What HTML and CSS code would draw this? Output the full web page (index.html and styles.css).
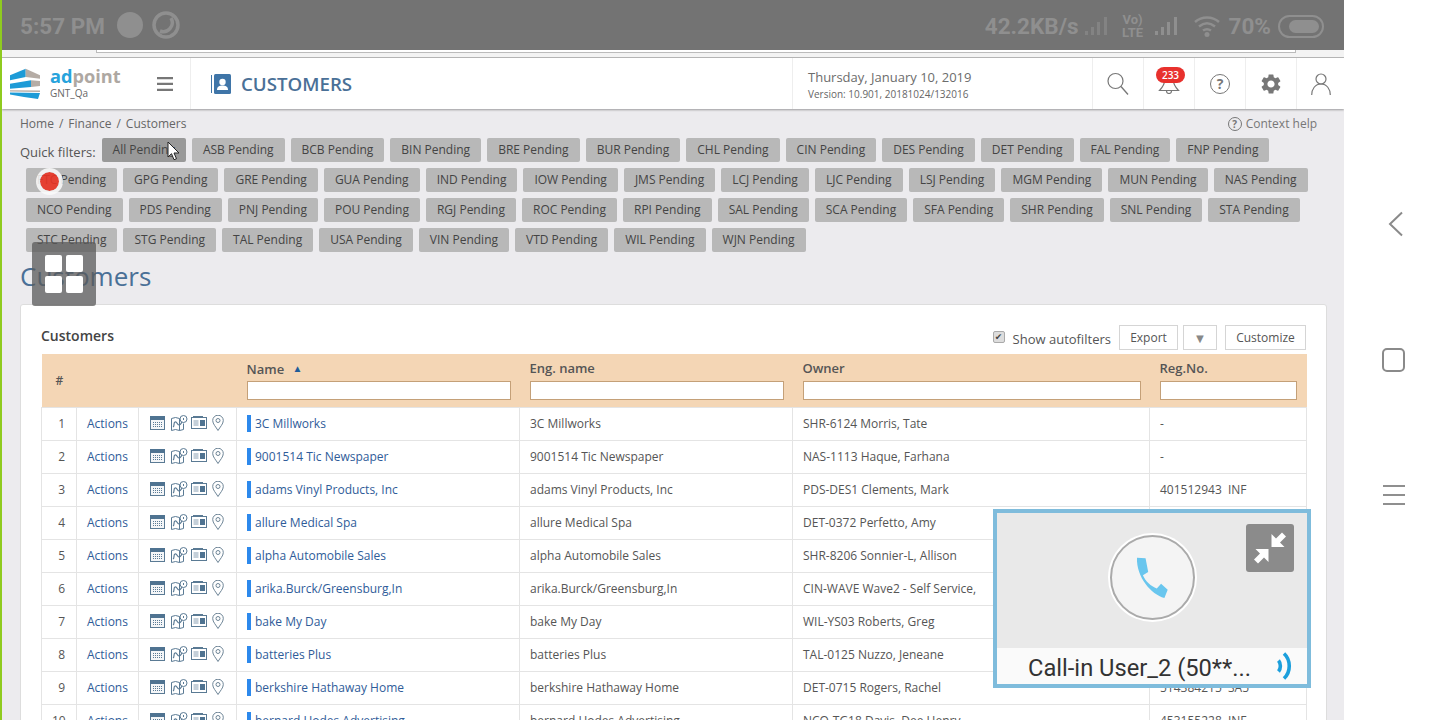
FILE: index.html
```html
<!DOCTYPE html>
<html lang="en">
<head>
  <meta charset="UTF-8">
  <meta name="viewport" content="width=device-width, initial-scale=1.0">
  <title>Customers</title>
  <link rel="stylesheet" href="styles.css">
</head>
<body>
  <svg class="defs" width="0" height="0">
    <symbol id="i-cal" viewBox="0 0 15 14">
      <rect x="0.5" y="0.5" width="14" height="13" fill="#f4f6f8" stroke="#5a7a94"/>
      <rect x="0" y="0" width="15" height="4" fill="#4f7391"/>
      <path d="M3 6.500h9M3 8.500h9M3 10.500h9" stroke="#5a7a94" stroke-width="1" stroke-dasharray="1 1"/>
    </symbol>
    <symbol id="i-map" viewBox="0 0 17 16">
      <path d="M0.5 3.5l4-1 4 1v12l-4-1-4 1z" fill="#fff" stroke="#5a7a94"/>
      <path d="M8.500 15.500l4-1 0-6" fill="none" stroke="#5a7a94"/>
      <path d="M2 12c2-1 0-4 2-5s2 3 4 3 2-2 3-3" fill="none" stroke="#5a7a94" stroke-width="1.200"/>
      <circle cx="12.500" cy="4" r="3.500" fill="#fff" stroke="#5a7a94"/>
      <path d="M12.500 3v2" stroke="#5a7a94"/>
    </symbol>
    <symbol id="i-card" viewBox="0 0 16 13">
      <rect x="0.500" y="1.500" width="15" height="11" fill="#fff" stroke="#5a7a94"/>
      <rect x="9" y="4" width="5" height="6" fill="#4f7391"/>
      <path d="M2.500 5h5M2.500 7h5M2.500 9h5" stroke="#8aa0b3"/>
      <path d="M2 0.500h10" stroke="#5a7a94"/>
    </symbol>
    <symbol id="i-pin" viewBox="0 0 12 16">
      <path d="M6 15.500C4 12 0.700 9 0.700 5.500a5.300 5.300 0 0 1 10.600 0C11.300 9 8 12 6 15.500z" fill="#fff" stroke="#6d8496"/>
      <circle cx="6" cy="5.500" r="2" fill="#fff" stroke="#6d8496"/>
    </symbol>
  </svg>

  <div class="screen">
    <div class="statusbar">
      <span class="clock">5:57 PM</span>
      <span class="dot-solid"></span>
      <svg class="dot-ring" width="28" height="28" viewBox="0 0 28 28"><circle cx="14" cy="14" r="12" fill="none" stroke="currentColor" stroke-width="3.500"/><path d="M19 7a9 9 0 0 1-11 13" fill="none" stroke="currentColor" stroke-width="3.500"/></svg>
      <div class="status-right">
        <span class="speed">42.2KB/s</span>
        <svg class="bars dim" width="26" height="22" viewBox="0 0 26 22"><path d="M1 20h3v-4H1zM7 20h3v-8H7zM13 20h3V7h-3zM20 20h3V2h-3z" fill="currentColor"/></svg>
        <span class="volte">Vo)<br>LTE</span>
        <svg class="bars" width="26" height="22" viewBox="0 0 26 22"><path d="M1 20h3v-4H1zM7 20h3v-8H7zM13 20h3V7h-3zM20 20h3V2h-3z" fill="currentColor"/></svg>
        <svg class="wifi" width="28" height="24" viewBox="0 0 28 24"><path d="M1 8c7-6 17-6 24 0M5 12.500c5-4 11-4 16 0M9 16.500c3-2 5-2 8 0" fill="none" stroke="currentColor" stroke-width="2.500"/><circle cx="13" cy="20.500" r="2.500" fill="currentColor"/></svg>
        <span class="pct">70%</span>
        <span class="battery"><span class="battery-fill"></span></span>
      </div>
    </div>

    <div class="topstrip"><div class="topstrip-input"></div></div>

    <header class="header">
      <div class="brand">
        <svg class="logo" width="30" height="32" viewBox="0 0 30 32">
          <path d="M0 7.300L15.700 0.700V9L0 12.300z" fill="#1d9bd7"/>
          <path d="M15.700 0.700L30 7.300v3.400L15.700 9z" fill="#b5aca5"/>
          <path d="M0 15.700l21-3.400V19L0 20.700z" fill="#1d9bd7"/>
          <path d="M21 12.300l9 .7v5l-9 1z" fill="#b5aca5"/>
          <path d="M0 22.300l30 .2V24L0 23.500z" fill="#b5aca5"/>
          <path d="M0 24.500L30 25l-2 6-14-2L0 26.500z" fill="#1d9bd7"/>
        </svg>
        <div class="brand-text">
          <div class="brand-name"><span class="brand-ad">ad</span>point</div>
          <div class="brand-sub">GNT_Qa</div>
        </div>
        <svg class="burger" width="16" height="14" viewBox="0 0 16 14"><path d="M0 0h16v2.300H0zM0 5.800h16v2.300H0zM0 11.700h16V14H0z" fill="#777"/></svg>
      </div>
      <div class="page-title">
        <svg width="20" height="20" viewBox="0 0 20 20">
          <rect x="0" y="1" width="1" height="18" fill="#3f75a8"/>
          <rect x="3" y="0" width="17" height="20" rx="1.500" fill="#3f75a8"/>
          <circle cx="11.500" cy="8" r="3.200" fill="#fff"/>
          <path d="M6 16c0-3.500 2.500-4.500 5.500-4.500S17 12.500 17 16z" fill="#fff"/>
        </svg>
        <span class="page-title-text">CUSTOMERS</span>
      </div>
      <div class="date-box">
        <div class="date">Thursday, January 10, 2019</div>
        <div class="version">Version: 10.901, 20181024/132016</div>
      </div>
      <div class="head-icon">
        <svg width="22" height="24" viewBox="0 0 22 24"><circle cx="8.500" cy="9" r="7.500" fill="none" stroke="#777" stroke-width="1.200"/><path d="M14 14.500l7 8" stroke="#777" stroke-width="1.300"/></svg>
      </div>
      <div class="head-icon">
        <svg class="bell" width="22" height="20" viewBox="0 0 22 20"><path d="M11 1C7 1 6.500 4 6.500 7c0 4-2 6-5 9.500h19c-3-3.500-5-5.500-5-9.500 0-3-.5-6-4.500-6z" fill="#fff" stroke="#777" stroke-width="1.200"/><path d="M8.500 17a2.500 2.500 0 0 0 5 0" fill="none" stroke="#777" stroke-width="1.200"/></svg>
        <span class="badge">233</span>
      </div>
      <div class="head-icon">
        <span class="help-big">?</span>
      </div>
      <div class="head-icon">
        <svg width="24" height="24" viewBox="0 0 24 24"><path d="M19.140 12.940c.04-.3.06-.61.06-.94 0-.32-.02-.64-.07-.94l2.030-1.580a.49.49 0 0 0 .12-.61l-1.920-3.320a.488.488 0 0 0-.59-.22l-2.390.96c-.5-.38-1.030-.7-1.620-.94l-.36-2.540a.484.484 0 0 0-.48-.41h-3.840c-.24 0-.43.17-.47.41l-.36 2.540c-.59.24-1.130.57-1.620.94l-2.390-.96c-.22-.08-.47 0-.59.22L2.740 8.870c-.12.21-.08.47.12.61l2.030 1.580c-.05.3-.09.63-.09.94s.02.64.07.94l-2.030 1.580a.49.49 0 0 0-.12.61l1.920 3.320c.12.22.37.29.59.22l2.390-.96c.5.38 1.030.7 1.620.94l.36 2.540c.05.24.24.41.48.41h3.840c.24 0 .44-.17.47-.41l.36-2.540c.59-.24 1.130-.56 1.620-.94l2.390.96c.22.08.47 0 .59-.22l1.920-3.320c.12-.22.07-.47-.12-.61l-2.010-1.580zM12 15.600c-1.980 0-3.600-1.620-3.600-3.600s1.620-3.600 3.600-3.600 3.600 1.620 3.600 3.600-1.620 3.600-3.600 3.600z" fill="#777"/></svg>
      </div>
      <div class="head-icon head-icon-last">
        <svg width="20" height="24" viewBox="0 0 20 24"><circle cx="10" cy="7" r="5" fill="none" stroke="#777" stroke-width="1.200"/><path d="M0.700 23c0-6 3.500-11 9.300-11s9.300 5 9.300 11" fill="none" stroke="#777" stroke-width="1.200"/></svg>
      </div>
    </header>

    <main class="content">
      <div class="crumbs">
        <span>Home<span class="sep">/</span>Finance<span class="sep">/</span>Customers</span>
        <span class="context-help"><span class="help-small">?</span>Context help</span>
      </div>

      <div class="filters">
        <span class="filters-label">Quick filters:</span>
        <a class="chip chip-active">All Pending</a>
        <a class="chip">ASB Pending</a>
        <a class="chip">BCB Pending</a>
        <a class="chip">BIN Pending</a>
        <a class="chip">BRE Pending</a>
        <a class="chip">BUR Pending</a>
        <a class="chip">CHL Pending</a>
        <a class="chip">CIN Pending</a>
        <a class="chip">DES Pending</a>
        <a class="chip">DET Pending</a>
        <a class="chip">FAL Pending</a>
        <a class="chip">FNP Pending</a>
        <a class="chip">FTC Pending</a>
        <a class="chip">GPG Pending</a>
        <a class="chip">GRE Pending</a>
        <a class="chip">GUA Pending</a>
        <a class="chip">IND Pending</a>
        <a class="chip">IOW Pending</a>
        <a class="chip">JMS Pending</a>
        <a class="chip">LCJ Pending</a>
        <a class="chip">LJC Pending</a>
        <a class="chip">LSJ Pending</a>
        <a class="chip">MGM Pending</a>
        <a class="chip">MUN Pending</a>
        <a class="chip">NAS Pending</a>
        <a class="chip">NCO Pending</a>
        <a class="chip">PDS Pending</a>
        <a class="chip">PNJ Pending</a>
        <a class="chip">POU Pending</a>
        <a class="chip">RGJ Pending</a>
        <a class="chip">ROC Pending</a>
        <a class="chip">RPI Pending</a>
        <a class="chip">SAL Pending</a>
        <a class="chip">SCA Pending</a>
        <a class="chip">SFA Pending</a>
        <a class="chip">SHR Pending</a>
        <a class="chip">SNL Pending</a>
        <a class="chip">STA Pending</a>
        <a class="chip">STC Pending</a>
        <a class="chip">STG Pending</a>
        <a class="chip">TAL Pending</a>
        <a class="chip">USA Pending</a>
        <a class="chip">VIN Pending</a>
        <a class="chip">VTD Pending</a>
        <a class="chip">WIL Pending</a>
        <a class="chip">WJN Pending</a>
      </div>

      <h1 class="heading">Customers</h1>

      <section class="card">
        <div class="card-top">
          <span class="card-title">Customers</span>
          <div class="tools">
            <span class="check">&#10004;</span>
            <span class="tools-label">Show autofilters</span>
            <button class="btn btn-export">Export</button>
            <button class="btn btn-arrow">&#9660;</button>
            <button class="btn btn-custom">Customize</button>
          </div>
        </div>

        <table class="grid">
          <colgroup>
            <col class="c-num"><col class="c-act"><col class="c-ico"><col class="c-name"><col class="c-eng"><col class="c-owner"><col class="c-reg">
          </colgroup>
          <thead>
            <tr>
              <th class="th-num">#</th>
              <th colspan="2"></th>
              <th><div class="th-label">Name <span class="sort">&#9650;</span></div><input class="th-input" type="text"></th>
              <th><div class="th-label">Eng. name</div><input class="th-input" type="text"></th>
              <th><div class="th-label">Owner</div><input class="th-input" type="text"></th>
              <th><div class="th-label">Reg.No.</div><input class="th-input" type="text"></th>
            </tr>
          </thead>
          <tbody>
            <tr>
              <td class="num">1</td><td><a class="link">Actions</a></td>
              <td class="ico"><svg class="i1"><use href="#i-cal"/></svg><svg class="i2"><use href="#i-map"/></svg><svg class="i3"><use href="#i-card"/></svg><svg class="i4"><use href="#i-pin"/></svg></td>
              <td><a class="link name">3C Millworks</a></td><td>3C Millworks</td><td>SHR-6124 Morris, Tate</td><td>-</td>
            </tr>
            <tr>
              <td class="num">2</td><td><a class="link">Actions</a></td>
              <td class="ico"><svg class="i1"><use href="#i-cal"/></svg><svg class="i2"><use href="#i-map"/></svg><svg class="i3"><use href="#i-card"/></svg><svg class="i4"><use href="#i-pin"/></svg></td>
              <td><a class="link name">9001514 Tic Newspaper</a></td><td>9001514 Tic Newspaper</td><td>NAS-1113 Haque, Farhana</td><td>-</td>
            </tr>
            <tr>
              <td class="num">3</td><td><a class="link">Actions</a></td>
              <td class="ico"><svg class="i1"><use href="#i-cal"/></svg><svg class="i2"><use href="#i-map"/></svg><svg class="i3"><use href="#i-card"/></svg><svg class="i4"><use href="#i-pin"/></svg></td>
              <td><a class="link name">adams Vinyl Products, Inc</a></td><td>adams Vinyl Products, Inc</td><td>PDS-DES1 Clements, Mark</td><td>401512943&nbsp; INF</td>
            </tr>
            <tr>
              <td class="num">4</td><td><a class="link">Actions</a></td>
              <td class="ico"><svg class="i1"><use href="#i-cal"/></svg><svg class="i2"><use href="#i-map"/></svg><svg class="i3"><use href="#i-card"/></svg><svg class="i4"><use href="#i-pin"/></svg></td>
              <td><a class="link name">allure Medical Spa</a></td><td>allure Medical Spa</td><td>DET-0372 Perfetto, Amy</td><td></td>
            </tr>
            <tr>
              <td class="num">5</td><td><a class="link">Actions</a></td>
              <td class="ico"><svg class="i1"><use href="#i-cal"/></svg><svg class="i2"><use href="#i-map"/></svg><svg class="i3"><use href="#i-card"/></svg><svg class="i4"><use href="#i-pin"/></svg></td>
              <td><a class="link name">alpha Automobile Sales</a></td><td>alpha Automobile Sales</td><td>SHR-8206 Sonnier-L, Allison</td><td></td>
            </tr>
            <tr>
              <td class="num">6</td><td><a class="link">Actions</a></td>
              <td class="ico"><svg class="i1"><use href="#i-cal"/></svg><svg class="i2"><use href="#i-map"/></svg><svg class="i3"><use href="#i-card"/></svg><svg class="i4"><use href="#i-pin"/></svg></td>
              <td><a class="link name">arika.Burck/Greensburg,In</a></td><td>arika.Burck/Greensburg,In</td><td>CIN-WAVE Wave2 - Self Service,</td><td></td>
            </tr>
            <tr>
              <td class="num">7</td><td><a class="link">Actions</a></td>
              <td class="ico"><svg class="i1"><use href="#i-cal"/></svg><svg class="i2"><use href="#i-map"/></svg><svg class="i3"><use href="#i-card"/></svg><svg class="i4"><use href="#i-pin"/></svg></td>
              <td><a class="link name">bake My Day</a></td><td>bake My Day</td><td>WIL-YS03 Roberts, Greg</td><td></td>
            </tr>
            <tr>
              <td class="num">8</td><td><a class="link">Actions</a></td>
              <td class="ico"><svg class="i1"><use href="#i-cal"/></svg><svg class="i2"><use href="#i-map"/></svg><svg class="i3"><use href="#i-card"/></svg><svg class="i4"><use href="#i-pin"/></svg></td>
              <td><a class="link name">batteries Plus</a></td><td>batteries Plus</td><td>TAL-0125 Nuzzo, Jeneane</td><td></td>
            </tr>
            <tr>
              <td class="num">9</td><td><a class="link">Actions</a></td>
              <td class="ico"><svg class="i1"><use href="#i-cal"/></svg><svg class="i2"><use href="#i-map"/></svg><svg class="i3"><use href="#i-card"/></svg><svg class="i4"><use href="#i-pin"/></svg></td>
              <td><a class="link name">berkshire Hathaway Home</a></td><td>berkshire Hathaway Home</td><td>DET-0715 Rogers, Rachel</td><td>514384215&nbsp; SA5</td>
            </tr>
            <tr>
              <td class="num">10</td><td><a class="link">Actions</a></td>
              <td class="ico"><svg class="i1"><use href="#i-cal"/></svg><svg class="i2"><use href="#i-map"/></svg><svg class="i3"><use href="#i-card"/></svg><svg class="i4"><use href="#i-pin"/></svg></td>
              <td><a class="link name">bernard Hodes Advertising</a></td><td>bernard Hodes Advertising</td><td>NCO-TG18 Davis, Dee Henry</td><td>453155228&nbsp; INF</td>
            </tr>
          </tbody>
        </table>
      </section>
    </main>

    <!-- things floating over the page -->
    <span class="rec-dot"></span>
    <svg class="cursor" width="13" height="20" viewBox="0 0 13 20"><path d="M1 1v15l3.500-3.300 2.500 6 2.500-1-2.500-5.700h5z" fill="#fff" stroke="#222"/></svg>
    <div class="float-grid"><span></span><span></span><span></span><span></span></div>

    <div class="call">
      <div class="call-body">
        <div class="call-circle">
          <svg width="38" height="47" viewBox="460 165 115 140"><path d="M472 175L498 177L506 218L490 228C497 245 515 262 532 268L545 254L565 272L555 297C515 285 470 235 472 175Z" fill="#69c6ee"/></svg>
        </div>
        <div class="call-min">
          <svg width="48" height="48" viewBox="0 0 48 48"><path d="M25.500 23V10l4.500 4.500 6-6 4 4-6 6 4.500 4.500zM22.500 25v13L18 33.500l-6 6-4-4 6-6L9.500 25z" fill="#fff"/></svg>
        </div>
      </div>
      <div class="call-foot">
        <span class="call-name">Call-in User_2 (50**...</span>
        <svg class="call-signal" width="18" height="28" viewBox="0 0 18 28"><path d="M2.500 8.500c2.500 3 2.500 8 0 11" fill="none" stroke="#1c9fdc" stroke-width="3.600"/><path d="M8 1.500c7 6.500 7 18.500 0 25" fill="none" stroke="#1c9fdc" stroke-width="3.600"/></svg>
      </div>
    </div>
  </div>

  <nav class="softkeys">
    <svg class="softkey-back" width="16" height="26" viewBox="0 0 16 26"><path d="M14 1.500L2 13l12 11.500" fill="none" stroke="#8a8a8a" stroke-width="2"/></svg>
    <span class="softkey-square"></span>
    <svg class="softkey-menu" width="24" height="20" viewBox="0 0 24 20"><path d="M1 1h22M1 10h22M1 19h22" stroke="#8f8f8f" stroke-width="2"/></svg>
  </nav>
</body>
</html>
```

FILE: styles.css
```css
* {
  box-sizing: border-box;
}
html, body {
  margin: 0;
  padding: 0;
  height: 720px;
  overflow: hidden;
}
body {
  display: flex;
  width: 1440px;
  background-color: #fff;
  font-family: "Open Sans", Arial, sans-serif;
  font-size: 12px;
  color: #555;
}
.defs {
  position: absolute;
}
.screen {
  position: relative;
  width: 1344px;
  height: 720px;
  overflow: hidden;
  background-color: #ecebee;
  border-left: 2px solid #8fcb1f;
  display: flex;
  flex-direction: column;
}

/* status bar */
.statusbar {
  flex: none;
  height: 50px;
  margin-left: -2px;
  background-color: #737373;
  color: #8f8f8f;
  display: flex;
  align-items: center;
  font-family: Roboto, Arial, sans-serif;
  font-weight: 700;
  font-size: 22.5px;
  padding: 2px 20px 0;
}
.clock {
  width: 97px;
}
.dot-solid {
  width: 26px;
  height: 26px;
  border-radius: 50%;
  background-color: #8f8f8f;
  margin: -2px 9px 0 0;
}
.dot-ring {
  margin-top: -2px;
}
.status-right {
  margin-left: auto;
  display: flex;
  align-items: center;
}
.speed {
  margin-right: 5px;
}
.bars.dim {
  opacity: 0.6;
  margin-right: 10px;
}
.volte {
  font-size: 13px;
  line-height: 13px;
  width: 26px;
  margin-right: 8px;
  text-align: center;
}
.wifi {
  margin-left: 14px;
  margin-right: 7px;
}
.pct {
  margin-right: 7px;
}
.battery {
  width: 46px;
  height: 23px;
  border: 2px solid #8f8f8f;
  border-radius: 12px;
  padding: 3px;
  display: flex;
  justify-content: flex-end;
}
.battery-fill {
  width: 30px;
  background-color: #8f8f8f;
  border-radius: 7px;
}

/* strip behind the header */
.topstrip {
  flex: none;
  height: 8px;
  background-color: #f3f3f3;
  border-bottom: 1px solid #b9b9b9;
  padding: 0 48px 0 94px;
}
.topstrip-input {
  height: 3px;
  background-color: #fff;
  border: 1px solid #bbb;
  border-top: none;
}

/* header */
.header {
  flex: none;
  height: 51px;
  background-color: #fff;
  box-shadow: 0 1px 2px rgba(0, 0, 0, 0.35);
  display: flex;
  align-items: stretch;
  position: relative;
}
.brand {
  width: 189px;
  padding-left: 8px;
  border-right: 1px solid #eee;
  display: flex;
  align-items: center;
}
.brand-text {
  margin-left: 10px;
  width: 107px;
}
.brand-name {
  font-size: 18.2px;
  font-weight: 700;
  line-height: 20px;
  color: #aea8a2;
  margin-top: -2px;
}
.brand-ad {
  color: #27a3dc;
}
.brand-sub {
  font-size: 10px;
  line-height: 14px;
  color: #666;
}
.page-title {
  flex: 1;
  display: flex;
  align-items: center;
  padding-left: 20px;
}
.page-title-text {
  margin-left: 10px;
  font-size: 18.7px;
  font-weight: 600;
  color: #4a7097;
}
.date-box {
  width: 300px;
  border-left: 1px solid #eee;
  padding-left: 15px;
  display: flex;
  flex-direction: column;
  justify-content: center;
}
.date {
  font-size: 13px;
  line-height: 20px;
  color: #6c6c6c;
}
.version {
  font-size: 10px;
  line-height: 14px;
  color: #666;
}
.head-icon {
  width: 51px;
  border-left: 1px solid #eee;
  display: flex;
  align-items: center;
  justify-content: center;
  position: relative;
}
.head-icon-last {
  width: 48px;
}
.bell {
  margin-top: 0;
}
.badge {
  position: absolute;
  top: 9px;
  left: 12px;
  width: 29px;
  height: 16px;
  border-radius: 8px;
  background-color: #e8312d;
  color: #fff;
  font-size: 10px;
  font-weight: 600;
  line-height: 16px;
  text-align: center;
}
.help-big {
  width: 20px;
  height: 20px;
  border: 1.5px solid #777;
  border-radius: 50%;
  font-size: 14px;
  font-weight: 700;
  line-height: 17px;
  text-align: center;
  color: #777;
}

/* main content */
.content {
  flex: 1;
  padding: 0 17px 0 18px;
}
.crumbs {
  height: 29px;
  display: flex;
  justify-content: space-between;
  align-items: center;
  line-height: 29px;
  color: #666;
}
.sep {
  margin: 0 5px;
}
.context-help {
  display: flex;
  align-items: center;
  color: #777;
  margin-right: 10px;
}
.help-small {
  width: 14px;
  height: 14px;
  border: 1px solid #777;
  border-radius: 50%;
  font-size: 10px;
  font-weight: 700;
  line-height: 12px;
  text-align: center;
  margin-right: 4px;
}
.filters {
  display: flex;
  flex-wrap: wrap;
}
.filters-label {
  font-size: 13px;
  line-height: 28px;
  color: #555;
  height: 24px;
}
.chip {
  height: 24px;
  line-height: 24px;
  padding: 0 11px;
  margin: 0 0 6px 6px;
  background-color: #b8b8b8;
  border-radius: 2px;
  color: #444;
  white-space: nowrap;
}
.chip-active {
  background-color: #999;
}
.heading {
  margin: 0;
  height: 46px;
  line-height: 36px;
  font-size: 26px;
  font-weight: 400;
  color: #4a7097;
}
.card {
  background-color: #fff;
  border: 1px solid #ddd;
  border-radius: 3px;
  padding: 20px 20px 0;
}
.card-top {
  height: 29px;
  display: flex;
  justify-content: space-between;
}
.card-title {
  font-size: 14px;
  font-weight: 600;
  line-height: 22px;
  color: #444;
}
.tools {
  display: flex;
  height: 25px;
  align-items: center;
}
.check {
  width: 12px;
  height: 12px;
  border: 1px solid #aaa;
  border-radius: 2px;
  background-color: #ddd;
  font-family: "DejaVu Sans", sans-serif;
  font-size: 9px;
  line-height: 10px;
  text-align: center;
  color: #444;
  margin: -2px 8px 0 0;
}
.tools-label {
  font-size: 13px;
  margin: 3px 8px 0 0;
  color: #555;
}
.btn {
  height: 25px;
  padding: 0;
  background-color: #fff;
  border: 1px solid #d5d5d5;
  font-family: inherit;
  font-size: 12px;
  color: #555;
}
.btn-export {
  width: 59px;
  margin-right: 5px;
}
.btn-arrow {
  width: 34px;
  margin-right: 8px;
  font-size: 13px;
  color: #888;
}
.btn-custom {
  width: 81px;
}

/* table */
.grid {
  width: 1265px;
  table-layout: fixed;
  border-collapse: collapse;
}
.c-num { width: 35px; }
.c-act { width: 62px; }
.c-ico { width: 98px; }
.c-name { width: 283px; }
.c-eng { width: 273px; }
.c-owner { width: 357px; }
.c-reg { width: 157px; }
.grid th {
  height: 53px;
  background-color: #f4d6b5;
  text-align: left;
  vertical-align: top;
  padding: 5px 9px 0 10px;
  font-size: 13px;
  font-weight: 600;
  color: #555;
}
.grid th:last-child {
  padding-right: 10px;
}
.grid th.th-num {
  vertical-align: middle;
  padding: 0 0 0 14px;
  font-size: 12px;
}
.th-label {
  height: 18px;
  line-height: 18px;
}
.sort {
  font-size: 10px;
  color: #1f5d99;
  margin-left: 5px;
  vertical-align: 2px;
}
.th-input {
  display: block;
  width: 100%;
  height: 19px;
  margin-top: 4px;
  padding: 0;
  background-color: #fff;
  border: 1px solid #c4a078;
}
.grid td {
  height: 33px;
  padding: 0 10px;
  border: 1px solid #e4e4e4;
  white-space: nowrap;
  overflow: hidden;
  color: #555;
}
.grid td.num {
  text-align: right;
  padding-right: 11px;
}
.grid td.ico {
  padding: 0 0 0 11px;
  font-size: 0;
}
.ico svg {
  vertical-align: middle;
  margin-top: -2px;
}
.i1 { width: 15px; height: 14px; margin-right: 6px; }
.i2 { width: 17px; height: 16px; margin-right: 3px; }
.i3 { width: 16px; height: 13px; margin-right: 5px; }
.i4 { width: 12px; height: 16px; }
.link {
  color: #2f5c99;
}
.name {
  display: inline-block;
  border-left: 4px solid #2d89ec;
  padding-left: 4px;
  line-height: 17px;
}

/* floating bits */
.rec-dot {
  position: absolute;
  left: 34px;
  top: 168px;
  width: 27px;
  height: 27px;
  border-radius: 50%;
  background-color: rgba(234, 51, 35, 0.9);
  background-clip: padding-box;
  border: 4px solid rgba(250, 250, 250, 0.85);
}
.cursor {
  position: absolute;
  left: 165px;
  top: 141px;
}
.float-grid {
  position: absolute;
  left: 30px;
  top: 242px;
  width: 64px;
  height: 64px;
  padding: 13px;
  background-color: rgba(90, 90, 90, 0.75);
  border-radius: 3px;
  display: grid;
  grid-template-columns: 17px 17px;
  grid-template-rows: 17px 17px;
  gap: 4px;
}
.float-grid span {
  background-color: #fff;
  border-radius: 2px;
}
.call {
  position: absolute;
  left: 991px;
  top: 509px;
  width: 318px;
  height: 179px;
  border: 4px solid #7fbcdc;
  display: flex;
  flex-direction: column;
}
.call-body {
  position: relative;
  flex: 1;
  background-color: #e9e9e9;
  display: flex;
  align-items: center;
  justify-content: center;
  padding-bottom: 7px;
}
.call-circle {
  width: 85px;
  height: 85px;
  border-radius: 50%;
  background-color: #f4f4f4;
  border: 2px solid #aaa;
  box-shadow: 0 0 0 2px #fff;
  display: flex;
  align-items: center;
  justify-content: center;
}
.call-min {
  position: absolute;
  right: 13px;
  top: 11px;
  width: 48px;
  height: 48px;
  background-color: #8b8b8b;
  border-radius: 3px;
}
.call-foot {
  flex: none;
  height: 36px;
  background-color: #fafafa;
  display: flex;
  align-items: center;
  padding: 0 13px 0 31px;
  justify-content: space-between;
}
.call-name {
  font-family: Roboto, Arial, sans-serif;
  font-size: 23.7px;
  color: #333;
  white-space: nowrap;
  padding-top: 3px;
}

/* android side keys */
.softkeys {
  width: 96px;
  height: 720px;
  display: flex;
  flex-direction: column;
  align-items: center;
  padding: 211px 0 0 3px;
}
.softkey-back {
  margin-left: 4px;
}
.softkey-square {
  width: 23px;
  height: 24px;
  margin-top: 111px;
  border: 2px solid #8a8a8a;
  border-radius: 5px;
}
.softkey-menu {
  margin-top: 113px;
}
```
